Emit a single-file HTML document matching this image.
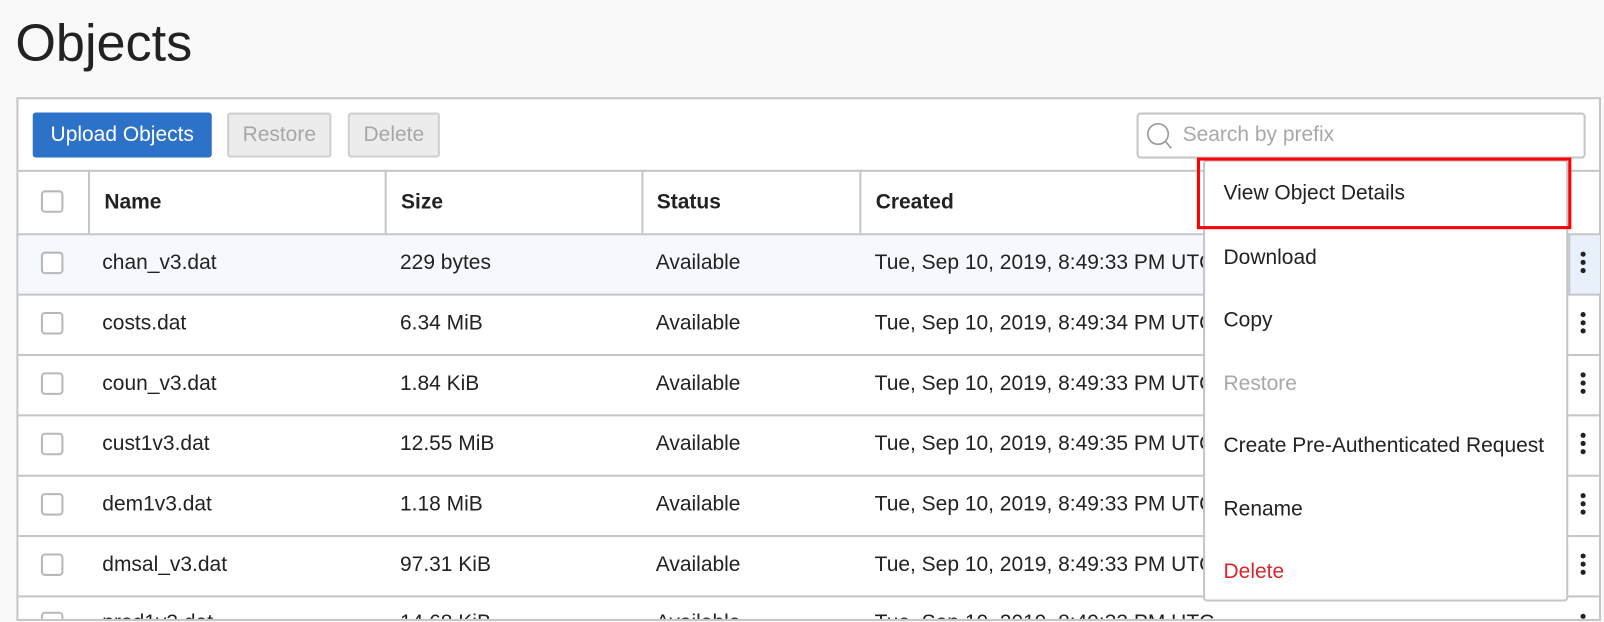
<!DOCTYPE html>
<html><head><meta charset="utf-8"><style>
*{box-sizing:border-box;margin:0;padding:0}
body{width:1604px;height:622px;overflow:hidden;background:#f9f9f9;font-family:"Liberation Sans",Arial,sans-serif;color:#222;position:relative}
#w{position:absolute;left:0;top:0;width:1568px;height:608px;transform:scale(1.023);transform-origin:0 0}
.abs{position:absolute}
h1{position:absolute;left:15px;top:12px;font-size:51px;font-weight:normal;color:#222}
.panel{position:absolute;left:16px;top:95px;width:1549px;height:512px;background:#fff;border:2px solid #c4c6ca;overflow:hidden}
.btn{position:absolute;top:110px;height:44px;border-radius:3px;font-size:20.5px;line-height:44px;text-align:center;white-space:nowrap}
.cb{position:absolute;left:40px;width:22px;height:22px;border:2px solid #b5b8bc;border-radius:4px;background:#fff}
.hl{position:absolute;left:18px;width:1546px;height:2px;background:#c4c6ca}
.vl{position:absolute;top:166px;width:2px;height:62px;background:#c4c6ca}
.t{position:absolute;font-size:20.5px;white-space:nowrap}
.th{font-weight:bold}
.dots{position:absolute;left:1545px;width:6px}
.dots i{display:block;width:5px;height:5px;border-radius:50%;background:#222;margin-bottom:3px}
.menu{position:absolute;left:1176px;top:156px;width:357px;height:432px;background:#fff;border:2px solid #c4c6ca;border-radius:4px}
.mi{position:absolute;left:1196px;font-size:20.5px;white-space:nowrap}
</style></head><body><div id="w">
<h1>Objects</h1>
<div class="panel"></div>
<div class="btn" style="left:32px;width:175px;background:#2d72c9;color:#fff">Upload Objects</div>
<div class="btn" style="left:222px;width:102px;background:#ececec;border:2px solid #cfcfcf;color:#a7a7a7;line-height:40px">Restore</div>
<div class="btn" style="left:340px;width:90px;background:#ececec;border:2px solid #cfcfcf;color:#a7a7a7;line-height:40px">Delete</div>
<div class="abs" style="left:1111px;top:110px;width:439px;height:45px;border:2px solid #c4c6ca;border-radius:4px;background:#fff"></div>
<svg class="abs" style="left:1120px;top:118px" width="28" height="30" viewBox="0 0 28 30"><circle cx="12" cy="13" r="10" fill="none" stroke="#999" stroke-width="1.6"/><line x1="19" y1="20" x2="25" y2="27" stroke="#999" stroke-width="1.6"/></svg>
<div class="t" style="left:1156px;top:120px;color:#a8a8a8">Search by prefix</div>
<div class="hl" style="top:166px"></div>
<div class="vl" style="left:86px"></div><div class="vl" style="left:376px"></div><div class="vl" style="left:627px"></div><div class="vl" style="left:840px"></div>
<div class="cb" style="top:186px"></div>
<div class="t th" style="left:102px;top:186px">Name</div>
<div class="t th" style="left:392px;top:186px">Size</div>
<div class="t th" style="left:642px;top:186px">Status</div>
<div class="t th" style="left:856px;top:186px">Created</div>
<div class="abs" style="left:18px;top:230px;width:1546px;height:57px;background:#f5f8fc"></div>
<div class="abs" style="left:1533px;top:230px;width:31px;height:57px;background:#e8f1fb;border-left:2px solid #c4c6ca"></div>
<div class="hl" style="top:228px"></div>
<div class="hl" style="top:287px"></div><div class="hl" style="top:346px"></div><div class="hl" style="top:405px"></div><div class="hl" style="top:464px"></div><div class="hl" style="top:523px"></div><div class="hl" style="top:582px"></div>

<div class="cb" style="top:246px"></div><div class="t" style="left:100px;top:245px">chan_v3.dat</div><div class="t" style="left:391px;top:245px">229 bytes</div><div class="t" style="left:641px;top:245px">Available</div><div class="t" style="left:855px;top:245px">Tue, Sep 10, 2019, 8:49:33 PM UTC</div>
<div class="cb" style="top:305px"></div><div class="t" style="left:100px;top:304px">costs.dat</div><div class="t" style="left:391px;top:304px">6.34 MiB</div><div class="t" style="left:641px;top:304px">Available</div><div class="t" style="left:855px;top:304px">Tue, Sep 10, 2019, 8:49:34 PM UTC</div>
<div class="cb" style="top:364px"></div><div class="t" style="left:100px;top:363px">coun_v3.dat</div><div class="t" style="left:391px;top:363px">1.84 KiB</div><div class="t" style="left:641px;top:363px">Available</div><div class="t" style="left:855px;top:363px">Tue, Sep 10, 2019, 8:49:33 PM UTC</div>
<div class="cb" style="top:423px"></div><div class="t" style="left:100px;top:422px">cust1v3.dat</div><div class="t" style="left:391px;top:422px">12.55 MiB</div><div class="t" style="left:641px;top:422px">Available</div><div class="t" style="left:855px;top:422px">Tue, Sep 10, 2019, 8:49:35 PM UTC</div>
<div class="cb" style="top:482px"></div><div class="t" style="left:100px;top:481px">dem1v3.dat</div><div class="t" style="left:391px;top:481px">1.18 MiB</div><div class="t" style="left:641px;top:481px">Available</div><div class="t" style="left:855px;top:481px">Tue, Sep 10, 2019, 8:49:33 PM UTC</div>
<div class="cb" style="top:541px"></div><div class="t" style="left:100px;top:540px">dmsal_v3.dat</div><div class="t" style="left:391px;top:540px">97.31 KiB</div><div class="t" style="left:641px;top:540px">Available</div><div class="t" style="left:855px;top:540px">Tue, Sep 10, 2019, 8:49:33 PM UTC</div>
<div class="abs" style="left:0;top:596px;width:1564px;height:9px;overflow:hidden"><div class="cb" style="top:2px"></div><div class="t" style="left:100px;top:1px">prod1v3.dat</div><div class="t" style="left:391px;top:1px">14.68 KiB</div><div class="t" style="left:641px;top:1px">Available</div><div class="t" style="left:855px;top:1px">Tue, Sep 10, 2019, 8:49:33 PM UTC</div><div class="dots" style="top:4px"><i></i></div></div>

<div class="dots" style="top:246px"><i></i><i></i><i></i></div>
<div class="dots" style="top:305px"><i></i><i></i><i></i></div>
<div class="dots" style="top:364px"><i></i><i></i><i></i></div>
<div class="dots" style="top:423px"><i></i><i></i><i></i></div>
<div class="dots" style="top:482px"><i></i><i></i><i></i></div>
<div class="dots" style="top:541px"><i></i><i></i><i></i></div>

<div class="menu"></div>
<div class="mi" style="top:177px">View Object Details</div>
<div class="mi" style="top:240px">Download</div>
<div class="mi" style="top:301px">Copy</div>
<div class="mi" style="top:363px;color:#a8a8a8">Restore</div>
<div class="mi" style="top:424px">Create Pre-Authenticated Request</div>
<div class="mi" style="top:486px">Rename</div>
<div class="mi" style="top:547px;color:#d8262d">Delete</div>
<div class="abs" style="left:1170px;top:154px;width:366px;height:70px;border:3.5px solid #f00"></div>
</div></body></html>
